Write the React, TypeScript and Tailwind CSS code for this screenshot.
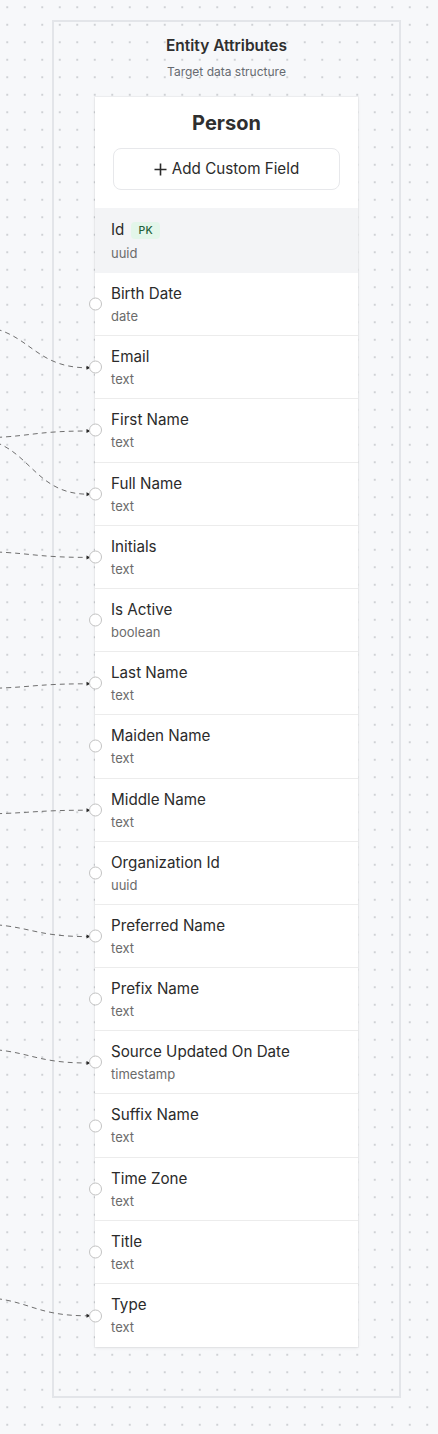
import React from "react";

type Field = { name: string; type: string; pk?: boolean };

const fields: Field[] = [
  { name: "Id", type: "uuid", pk: true },
  { name: "Birth Date", type: "date" },
  { name: "Email", type: "text" },
  { name: "First Name", type: "text" },
  { name: "Full Name", type: "text" },
  { name: "Initials", type: "text" },
  { name: "Is Active", type: "boolean" },
  { name: "Last Name", type: "text" },
  { name: "Maiden Name", type: "text" },
  { name: "Middle Name", type: "text" },
  { name: "Organization Id", type: "uuid" },
  { name: "Preferred Name", type: "text" },
  { name: "Prefix Name", type: "text" },
  { name: "Source Updated On Date", type: "timestamp" },
  { name: "Suffix Name", type: "text" },
  { name: "Time Zone", type: "text" },
  { name: "Title", type: "text" },
  { name: "Type", type: "text" },
];

const ROW_TOP = 273;
const ROW_H = 63.2;
const rowCenter = (i: number) => ROW_TOP + (i - 1) * ROW_H + ROW_H / 2;

const edges: { target: number; sy: number }[] = [
  { target: 2, sy: 325.6 },
  { target: 3, sy: 438 },
  { target: 4, sy: 438 },
  { target: 5, sy: 551.5 },
  { target: 7, sy: 688.6 },
  { target: 9, sy: 814 },
  { target: 11, sy: 923.7 },
  { target: 13, sy: 1048.6 },
  { target: 17, sy: 1297 },
];

function Edges() {
  const sx = -30;
  const tx = 88;
  const cx = (sx + 89) / 2;
  return (
    <svg
      className="absolute left-0 top-0 z-10 pointer-events-none"
      width={438}
      height={1434}
      viewBox="0 0 438 1434"
    >
      {edges.map((e, k) => {
        const ty = rowCenter(e.target);
        return (
          <g key={k}>
            <path
              d={`M ${sx} ${e.sy} C ${cx} ${e.sy}, ${cx} ${ty}, ${tx} ${ty}`}
              fill="none"
              stroke="#6f6f6f"
              strokeWidth={1}
              strokeDasharray="5 4"
            />
            <polygon
              points={`${86.5},${ty - 2} ${90.5},${ty} ${86.5},${ty + 2}`}
              fill="#2a2a2a"
            />
          </g>
        );
      })}
    </svg>
  );
}

function Row({ f, last }: { f: Field; last: boolean }) {
  if (f.pk) {
    return (
      <div className="h-[65px] bg-[#f3f4f6] px-4 pt-[12px]">
        <div className="flex items-center gap-[7px] h-[20px]">
          <span className="text-[15.2px] leading-[20px] text-[#2b2b2b]">{f.name}</span>
          <span className="h-[17px] px-[7px] rounded-[4px] bg-[#e3f6ea] text-[#22603a] text-[10.5px] leading-[17px] font-medium tracking-wide">
            PK
          </span>
        </div>
        <div className="mt-[4px] text-[13px] leading-[18px] text-[#6b6b6b]">{f.type}</div>
      </div>
    );
  }
  return (
    <div
      className={`relative h-[63.2px] px-4 pt-[11px] ${last ? "" : "border-b border-[#ececec]"}`}
    >
      <div className="absolute left-[-6.5px] top-1/2 -translate-y-1/2 w-[13px] h-[13px] rounded-full bg-white border-[1.5px] border-[#c3c3c3]" />
      <div className="text-[15.2px] leading-[20px] text-[#2b2b2b]">{f.name}</div>
      <div className="mt-[3px] text-[13px] leading-[18px] text-[#6b6b6b]">{f.type}</div>
    </div>
  );
}

export default function App() {
  return (
    <div
      className="relative w-[438px] h-[1434px] overflow-hidden bg-[#f7f8fa] bg-[radial-gradient(circle,#cfd1d5_0.7px,transparent_1px)] bg-[size:17.5px_17.5px] bg-[position:-1.5px_-1.5px] pt-[20px] pl-[52px]"
      style={{ fontFamily: "Inter, 'Noto Sans', 'Liberation Sans', sans-serif" }}
    >
      <Edges />
      <div className="w-[349px] h-[1378px] border-2 border-[#e3e5e9] flex flex-col items-center">
        <div className="pt-[14px] text-[15.5px] leading-[20px] font-semibold text-[#2f2f2f]">
          Entity Attributes
        </div>
        <div className="mt-[8px] text-[12px] leading-[16px] text-[#666a70]">
          Target data structure
        </div>
        <div className="relative z-20 mt-[17px] w-[263px] bg-white shadow-[0_1px_3px_rgba(0,0,0,0.08),0_0_0_1px_rgba(0,0,0,0.03)]">
          <div className="pt-[12px] text-center text-[20px] leading-[28px] font-bold text-[#2f2f2f]">
            Person
          </div>
          <div className="mt-[11px] mb-[18px] mx-[18px] h-[42px] rounded-[8px] border border-[#e7e8eb] bg-white flex items-center justify-center gap-[5px] text-[15.2px] text-[#2b2b2b]">
            <svg width="13" height="13" viewBox="0 0 13 13" fill="none">
              <path d="M6.5 0.5v12M0.5 6.5h12" stroke="#2b2b2b" strokeWidth="1.6" />
            </svg>
            <span>Add Custom Field</span>
          </div>
          {fields.map((f, i) => (
            <Row key={f.name} f={f} last={i === fields.length - 1} />
          ))}
        </div>
      </div>
    </div>
  );
}
